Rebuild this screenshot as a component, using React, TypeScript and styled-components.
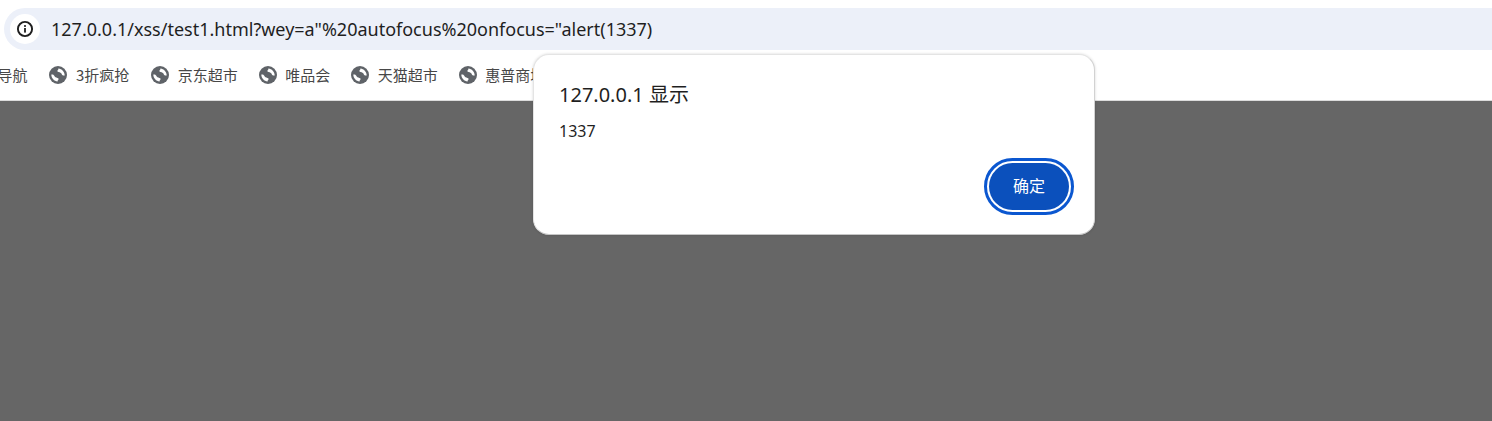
import React from "react";
import styled, { createGlobalStyle } from "styled-components";

const Global = createGlobalStyle`
  html, body { margin: 0; padding: 0; background: #ffffff; }
  body { font-family: "Noto Sans CJK SC", "Liberation Sans", sans-serif; }
`;

const Page = styled.div`
  position: relative;
  display: flex;
  flex-direction: column;
  width: 1492px;
  height: 421px;
  overflow: hidden;
`;

const AddressRow = styled.div`
  display: flex;
  height: 50px;
  box-sizing: border-box;
  padding: 8px 0 0 4px;
`;

const Omnibox = styled.div`
  flex: 1;
  display: flex;
  align-items: center;
  gap: 11px;
  padding-left: 6px;
  background: #ecf0f9;
  border-radius: 21px 0 0 21px;
`;

const InfoChip = styled.span`
  display: flex;
  align-items: center;
  justify-content: center;
  width: 30px;
  height: 30px;
  border-radius: 50%;
  background: #ffffff;
  color: #1f1f1f;
`;

const Url = styled.span`
  font-family: "Noto Sans", "Liberation Sans", sans-serif;
  font-size: 18px;
  color: #1f1f1f;
  white-space: nowrap;
`;

const BookmarkBar = styled.div`
  display: flex;
  align-items: center;
  height: 51px;
  box-sizing: border-box;
  border-bottom: 1px solid #dcdcdc;
  padding-bottom: 1px;
  overflow: hidden;
`;

const Bookmark = styled.div<{ $first?: boolean }>`
  display: flex;
  align-items: center;
  gap: 8.5px;
  flex: none;
  margin-left: ${(p) => (p.$first ? "-2.6px" : "0")};
  margin-right: 21px;
  font-size: 15px;
  line-height: 18px;
  color: #474747;
  white-space: nowrap;

  &:nth-child(-n + 2) {
    margin-right: 22px;
  }
`;

const Backdrop = styled.div`
  flex: 1;
  background: #666666;
`;

const Dialog = styled.div`
  position: absolute;
  left: 533px;
  top: 54px;
  width: 562px;
  height: 181px;
  box-sizing: border-box;
  display: flex;
  flex-direction: column;
  padding: 26px 25px 24px 25px;
  background: #ffffff;
  border: 1px solid #e4e4e4;
  border-right-color: #d2d2d2;
  border-bottom-color: #c6c6c6;
  border-radius: 16px;
  box-shadow: 0 0 3px rgba(0, 0, 0, 0.16);
`;

const Title = styled.div`
  font-family: "Noto Sans", "Noto Sans CJK SC", sans-serif;
  font-size: 20px;
  line-height: 28px;
  color: #1f1f1f;
`;

const Message = styled.div`
  margin-top: 12px;
  font-family: "Noto Sans", "Liberation Sans", sans-serif;
  font-size: 16px;
  line-height: 20px;
  color: #1f1f1f;
`;

const Actions = styled.div`
  margin-top: auto;
  display: flex;
  justify-content: flex-end;
`;

const OkButton = styled.button`
  width: 80px;
  height: 47px;
  border: none;
  border-radius: 24px;
  background: #0b50bc;
  color: #ffffff;
  font-family: "Noto Sans CJK SC", sans-serif;
  font-size: 16px;
  outline: 3px solid #0b57d0;
  outline-offset: 2px;
  padding: 0 0 3px;
`;

const InfoIcon = () => (
  <svg width="20" height="20" viewBox="0 0 20 20" fill="none">
    <circle cx="10" cy="10" r="7.1" stroke="currentColor" strokeWidth="1.9" />
    <rect x="9.1" y="9" width="1.8" height="4.6" fill="currentColor" />
    <rect x="9.1" y="6.1" width="1.8" height="1.8" fill="currentColor" />
  </svg>
);

const GlobeIcon = () => (
  <svg width="18" height="18" viewBox="0 0 18 18">
    <circle cx="9" cy="9" r="9" fill="#5f6368" />
    <path
      d="M9.4 2.4 C12.8 2.6 15.6 5.6 15.7 9.4 C14.4 9.9 13.4 9.4 12.9 8.4 C12.2 6.9 11 6.3 9.6 6.1 C8.6 5.9 8.2 5.2 8.4 4.6 C9 4.2 9.4 3.4 9.4 2.4 Z"
      fill="#ffffff"
    />
    <path
      d="M8.6 15.6 C5.2 15.4 2.4 12.4 2.3 8.6 C3.6 8.1 4.6 8.6 5.1 9.6 C5.8 11.1 7 11.7 8.4 11.9 C9.4 12.1 9.8 12.8 9.6 13.4 C9 13.8 8.6 14.6 8.6 15.6 Z"
      fill="#ffffff"
    />
  </svg>
);

const bookmarks = ["导航", "3折疯抢", "京东超市", "唯品会", "天猫超市", "惠普商城"];

export default function App() {
  return (
    <Page>
      <Global />
      <AddressRow>
        <Omnibox>
          <InfoChip>
            <InfoIcon />
          </InfoChip>
          <Url>127.0.0.1/xss/test1.html?wey=a"%20autofocus%20onfocus="alert(1337)</Url>
        </Omnibox>
      </AddressRow>
      <BookmarkBar>
        {bookmarks.map((label, i) => (
          <Bookmark key={label} $first={i === 0}>
            {i > 0 && <GlobeIcon />}
            {label}
          </Bookmark>
        ))}
      </BookmarkBar>
      <Backdrop />
      <Dialog>
        <Title>127.0.0.1 显示</Title>
        <Message>1337</Message>
        <Actions>
          <OkButton>确定</OkButton>
        </Actions>
      </Dialog>
    </Page>
  );
}
